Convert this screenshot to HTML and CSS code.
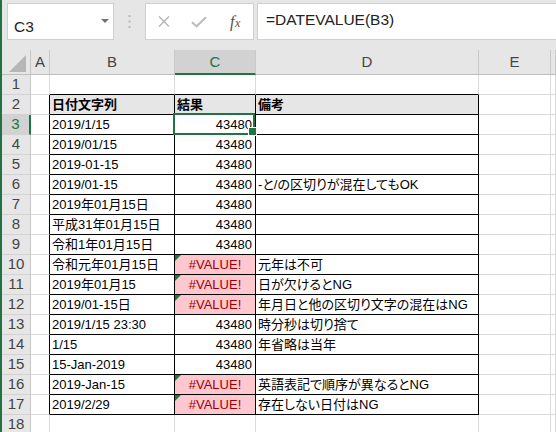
FILE: index.html
```html
<!DOCTYPE html>
<html lang="ja">
<head>
<meta charset="utf-8">
<title>DATEVALUE</title>
<link rel="stylesheet" href="styles.css">
</head>
<body>
<div class="app">
  <div class="bar">
    <div class="namebox">
      <span class="nm">C3</span>
      <svg class="dd" width="8" height="5" viewBox="0 0 8 5"><polygon points="0,0 8,0 4,4" fill="#707070"/></svg>
    </div>
    <div class="sep">
      <svg width="3" height="13" viewBox="0 0 3 13"><rect x="0.5" y="0" width="2" height="2" fill="#b9b9b9"/><rect x="0.5" y="5.5" width="2" height="2" fill="#b9b9b9"/><rect x="0.5" y="11" width="2" height="2" fill="#b9b9b9"/></svg>
    </div>
    <div class="fbtns">
      <span class="fb"><svg width="12" height="11" viewBox="0 0 12 11"><path d="M1 0.5 L11 10.5 M11 0.5 L1 10.5" stroke="#b4b4b4" stroke-width="1.3" fill="none"/></svg></span>
      <span class="fb"><svg width="16" height="12" viewBox="0 0 16 12"><polyline points="1,6.2 5.6,10.3 15,1.3" stroke="#bdbdbd" stroke-width="2.2" fill="none"/></svg></span>
      <span class="fb fx"><span class="fxt"><i class="f">f</i><i class="x">x</i></span></span>
    </div>
    <div class="formula">=DATEVALUE(B3)</div>
  </div>
  <div class="sheet">
    <div class="corner"><svg width="28" height="24" viewBox="0 0 28 24"><polygon points="7,22 24,5 24,22" fill="#b6b6b6"/></svg></div>
    <div class="ch">A</div>
    <div class="ch">B</div>
    <div class="ch sel">C</div>
    <div class="ch">D</div>
    <div class="ch">E</div>
    <div class="ch"></div>

    <div class="rh">1</div>
    <div class="c"></div><div class="c tb"></div><div class="c tb"></div><div class="c tb"></div><div class="c"></div><div class="c"></div>

    <div class="rh">2</div>
    <div class="c lb"></div><div class="c t hd">日付文字列</div><div class="c t hd">結果</div><div class="c t hd">備考</div><div class="c"></div><div class="c"></div>

    <div class="rh sel">3</div>
    <div class="c lb"></div><div class="c t">2019/1/15</div><div class="c t n act">43480</div><div class="c t"></div><div class="c"></div><div class="c"></div>

    <div class="rh">4</div>
    <div class="c lb"></div><div class="c t">2019/01/15</div><div class="c t n">43480</div><div class="c t"></div><div class="c"></div><div class="c"></div>

    <div class="rh">5</div>
    <div class="c lb"></div><div class="c t">2019-01-15</div><div class="c t n">43480</div><div class="c t"></div><div class="c"></div><div class="c"></div>

    <div class="rh">6</div>
    <div class="c lb"></div><div class="c t">2019/01-15</div><div class="c t n">43480</div><div class="c t">-と/の区切りが混在してもOK</div><div class="c"></div><div class="c"></div>

    <div class="rh">7</div>
    <div class="c lb"></div><div class="c t">2019年01月15日</div><div class="c t n">43480</div><div class="c t"></div><div class="c"></div><div class="c"></div>

    <div class="rh">8</div>
    <div class="c lb"></div><div class="c t">平成31年01月15日</div><div class="c t n">43480</div><div class="c t"></div><div class="c"></div><div class="c"></div>

    <div class="rh">9</div>
    <div class="c lb"></div><div class="c t">令和1年01月15日</div><div class="c t n">43480</div><div class="c t"></div><div class="c"></div><div class="c"></div>

    <div class="rh">10</div>
    <div class="c lb"></div><div class="c t">令和元年01月15日</div><div class="c t err">#VALUE!</div><div class="c t">元年は不可</div><div class="c"></div><div class="c"></div>

    <div class="rh">11</div>
    <div class="c lb"></div><div class="c t">2019年01月15</div><div class="c t err">#VALUE!</div><div class="c t">日が欠けるとNG</div><div class="c"></div><div class="c"></div>

    <div class="rh">12</div>
    <div class="c lb"></div><div class="c t">2019/01-15日</div><div class="c t err">#VALUE!</div><div class="c t">年月日と他の区切り文字の混在はNG</div><div class="c"></div><div class="c"></div>

    <div class="rh">13</div>
    <div class="c lb"></div><div class="c t">2019/1/15 23:30</div><div class="c t n">43480</div><div class="c t">時分秒は切り捨て</div><div class="c"></div><div class="c"></div>

    <div class="rh">14</div>
    <div class="c lb"></div><div class="c t">1/15</div><div class="c t n">43480</div><div class="c t">年省略は当年</div><div class="c"></div><div class="c"></div>

    <div class="rh">15</div>
    <div class="c lb"></div><div class="c t">15-Jan-2019</div><div class="c t n">43480</div><div class="c t"></div><div class="c"></div><div class="c"></div>

    <div class="rh">16</div>
    <div class="c lb"></div><div class="c t">2019-Jan-15</div><div class="c t err">#VALUE!</div><div class="c t">英語表記で順序が異なるとNG</div><div class="c"></div><div class="c"></div>

    <div class="rh">17</div>
    <div class="c lb"></div><div class="c t">2019/2/29</div><div class="c t err">#VALUE!</div><div class="c t">存在しない日付はNG</div><div class="c"></div><div class="c"></div>

    <div class="rh">18</div>
    <div class="c"></div><div class="c"></div><div class="c"></div><div class="c"></div><div class="c"></div><div class="c"></div>
  </div>
</div>
</body>
</html>
```

FILE: styles.css
```css
* { box-sizing: border-box; }

html, body {
  margin: 0;
  padding: 0;
  width: 556px;
  height: 432px;
  overflow: hidden;
  background: #e6e6e6;
}

.app {
  width: 556px;
  height: 432px;
  overflow: hidden;
  border-left: 2px solid #217346;
  background: #e6e6e6;
  font-family: "Liberation Sans", "Noto Sans CJK JP", sans-serif;
}

/* formula bar */
.bar {
  height: 50px;
  display: flex;
  align-items: flex-start;
  padding-top: 3px;
}

.namebox {
  margin-left: 5px;
  width: 107px;
  height: 37px;
  background: #fff;
  border: 1px solid #cfcfcf;
  display: flex;
  align-items: center;
  padding-left: 6px;
}

.nm {
  font-size: 15.5px;
  line-height: 15px;
  color: #222;
  align-self: flex-end;
  margin-bottom: 5px;
}

.dd {
  margin-left: auto;
  margin-right: 4px;
  margin-top: -1px;
}

.sep {
  width: 31px;
  height: 37px;
  display: flex;
  align-items: center;
  justify-content: center;
}

.fbtns {
  width: 109px;
  height: 37px;
  background: #fff;
  border: 1px solid #cfcfcf;
  display: grid;
  grid-template-columns: 1fr 1fr 1fr;
  align-items: center;
  justify-items: center;
}

.fb {
  display: flex;
  align-items: center;
  justify-content: center;
  height: 35px;
}

.fx {
  font-family: "Liberation Serif", serif;
  color: #505050;
}

.fxt {
  display: block;
  line-height: 1;
  white-space: nowrap;
  margin-top: 1px;
}

.fxt .f {
  font-size: 16px;
}

.fxt .x {
  font-size: 12px;
  margin-left: 0.5px;
}

.formula {
  flex: 1;
  margin-left: 3px;
  height: 37px;
  background: #fff;
  border: 1px solid #cfcfcf;
  border-right: none;
  padding: 8px 0 0 8px;
  font-size: 15.5px;
  line-height: 16px;
  color: #222;
  white-space: nowrap;
}

/* sheet grid */
.sheet {
  display: grid;
  grid-template-columns: 29px 19px 125px 81px 223px 72px 1fr;
  grid-template-rows: 25px;
  grid-auto-rows: 20px;
  font-size: 13px;
  font-feature-settings: "palt";
}

.corner {
  background: #e6e6e6;
  border-right: 1px solid #c6c6c6;
  border-bottom: 1px solid #bdbdbd;
}

.corner svg { display: block; }

.ch {
  background: #e6e6e6;
  border-right: 1px solid #c9c9c9;
  border-bottom: 1px solid #bdbdbd;
  text-align: center;
  font-size: 15px;
  line-height: 23px;
  color: #444;
}

.ch.sel {
  background: #d2d2d2;
  border-bottom: 2px solid #217346;
  color: #217346;
}

.rh {
  background: #e6e6e6;
  border-right: 1px solid #c6c6c6;
  border-bottom: 1px solid #d2d2d2;
  text-align: center;
  font-size: 15px;
  line-height: 17px;
  color: #444;
}

.rh.sel {
  background: #d2d2d2;
  border-right: 2px solid #217346;
  color: #217346;
}

.c {
  background: #fff;
  border-right: 1px solid #dadada;
  border-bottom: 1px solid #dadada;
  padding: 0 2px;
  line-height: 19px;
  color: #000;
  white-space: nowrap;
  overflow: hidden;
}

.c.lb { border-right-color: #000; }
.c.tb { border-bottom-color: #000; }
.c.t {
  border-right-color: #000;
  border-bottom-color: #000;
}

.c.hd {
  background: #e7e6e6;
  font-weight: bold;
}

.c.n {
  text-align: right;
  padding-right: 3px;
}

.c.err {
  position: relative;
  background: #ffc7ce;
  color: #9c0006;
  text-align: center;
}

.c.err::before {
  content: "";
  position: absolute;
  top: 0;
  left: 0;
  width: 0;
  height: 0;
  border-top: 6px solid #1e7b3e;
  border-right: 6px solid transparent;
}

.c.act {
  position: relative;
  overflow: visible;
}

.c.act::after {
  content: "";
  position: absolute;
  left: -2px;
  top: -2px;
  right: 0;
  bottom: -1px;
  border: 2px solid #217346;
}

.c.act::before {
  content: "";
  position: absolute;
  right: -2px;
  bottom: -2px;
  width: 7px;
  height: 7px;
  background: #217346;
  border: 1px solid #fff;
  z-index: 2;
}
```
